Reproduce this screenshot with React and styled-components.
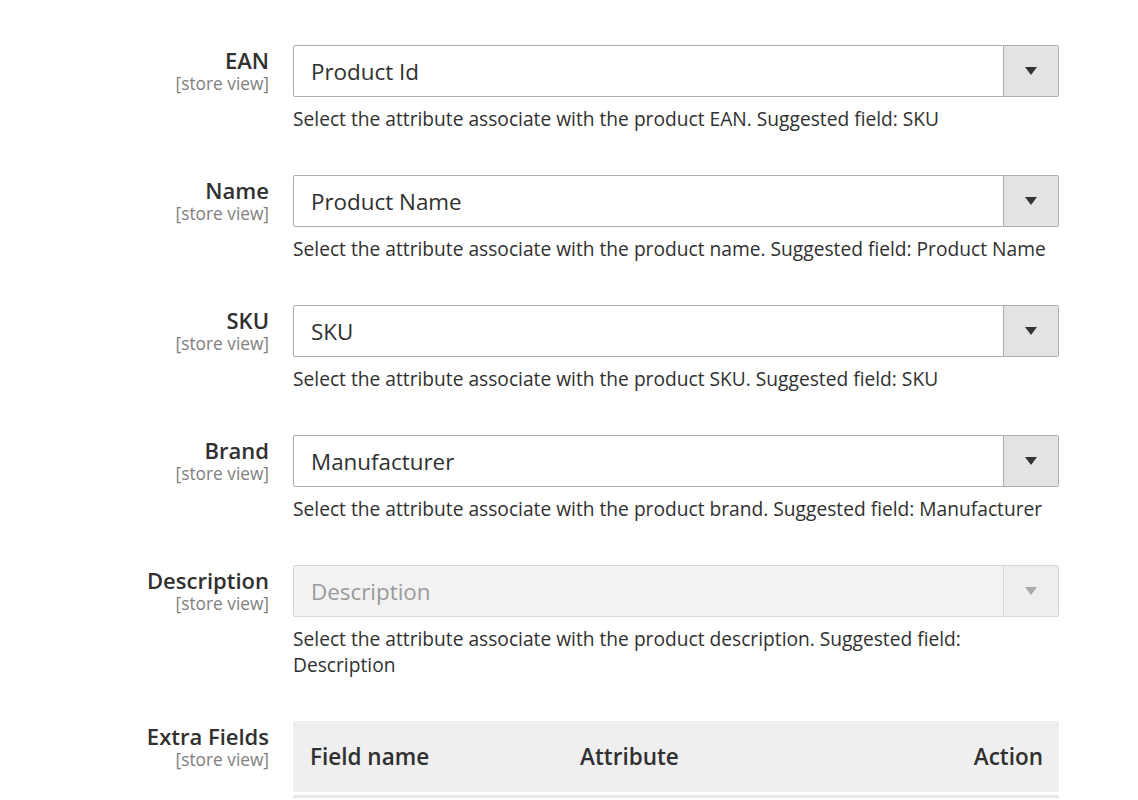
import React from "react";
import styled, { createGlobalStyle } from "styled-components";

const GlobalStyle = createGlobalStyle`
  body {
    margin: 0;
    background: #fff;
    font-family: "Open Sans", "Noto Sans", sans-serif;
    color: #303030;
  }
`;

const fields = [
  { label: "EAN", value: "Product Id", note: "Select the attribute associate with the product EAN. Suggested field: SKU" },
  { label: "Name", value: "Product Name", note: "Select the attribute associate with the product name. Suggested field: Product Name" },
  { label: "SKU", value: "SKU", note: "Select the attribute associate with the product SKU. Suggested field: SKU" },
  { label: "Brand", value: "Manufacturer", note: "Select the attribute associate with the product brand. Suggested field: Manufacturer" },
  {
    label: "Description",
    value: "Description",
    disabled: true,
    note: "Select the attribute associate with the product description. Suggested field: Description",
  },
];

export default function App() {
  return (
    <>
      <GlobalStyle />
      <Form>
        {fields.map((f) => (
          <Row key={f.label}>
            <Label>
              <LabelText>{f.label}</LabelText>
              <Scope>[store view]</Scope>
            </Label>
            <Control>
              <Select disabled={f.disabled}>
                <SelectValue disabled={f.disabled}>{f.value}</SelectValue>
                <Toggle disabled={f.disabled}>
                  <Arrow disabled={f.disabled} />
                </Toggle>
              </Select>
              <Note>{f.note}</Note>
            </Control>
          </Row>
        ))}
        <Row>
          <Label>
            <LabelText>Extra Fields</LabelText>
            <Scope>[store view]</Scope>
          </Label>
          <Control>
            <TableHead>
              <HeadCell>Field name</HeadCell>
              <HeadCell>Attribute</HeadCell>
              <HeadCell align="right">Action</HeadCell>
            </TableHead>
          </Control>
        </Row>
      </Form>
    </>
  );
}

const Form = styled.div`
  padding-top: 45px;
  width: 1059px;
`;

const Row = styled.div`
  display: grid;
  grid-template-columns: 269px 766px;
  column-gap: 24px;
  margin-bottom: 43px;
`;

const Label = styled.div`
  text-align: right;
  padding-top: 2px;
`;

const LabelText = styled.div`
  font-size: 22px;
  font-weight: 600;
  line-height: 26px;
  color: #303030;
`;

const Scope = styled.div`
  font-size: 17.3px;
  line-height: 22px;
  color: #808080;
`;

const Control = styled.div`
  display: flex;
  flex-direction: column;
`;

const Select = styled.div`
  display: flex;
  height: 52px;
  box-sizing: border-box;
  border: 1px solid ${(p) => (p.disabled ? "#d8d8d8" : "#adadad")};
  border-radius: 2px;
  background: ${(p) => (p.disabled ? "#f2f2f2" : "#fff")};
`;

const SelectValue = styled.div`
  flex: 1;
  display: flex;
  align-items: center;
  padding-left: 17px;
  font-size: 22.4px;
  color: ${(p) => (p.disabled ? "#9a9a9a" : "#303030")};
`;

const Toggle = styled.div`
  width: 54px;
  display: flex;
  align-items: center;
  justify-content: center;
  background: ${(p) => (p.disabled ? "#eeeeee" : "#e3e3e3")};
  border-left: 1px solid ${(p) => (p.disabled ? "#d8d8d8" : "#adadad")};
`;

const Arrow = styled.span`
  width: 0;
  height: 0;
  border-left: 6px solid transparent;
  border-right: 6px solid transparent;
  border-top: 8px solid ${(p) => (p.disabled ? "#a8a8a8" : "#333")};
`;

const Note = styled.div`
  margin-top: 9px;
  font-size: 19.2px;
  line-height: 26px;
  color: #303030;
`;

const TableHead = styled.div`
  display: grid;
  grid-template-columns: 270px 1fr auto;
  align-items: center;
  height: 71px;
  background: #efefef;
  border-bottom: 3px solid #fff;
  box-shadow: 0 3px 0 #e8e8e8;
`;

const HeadCell = styled.div`
  padding: 0 16px 0 17px;
  font-size: 22.5px;
  font-weight: 600;
  color: #303030;
  text-align: ${(p) => p.align || "left"};
`;
